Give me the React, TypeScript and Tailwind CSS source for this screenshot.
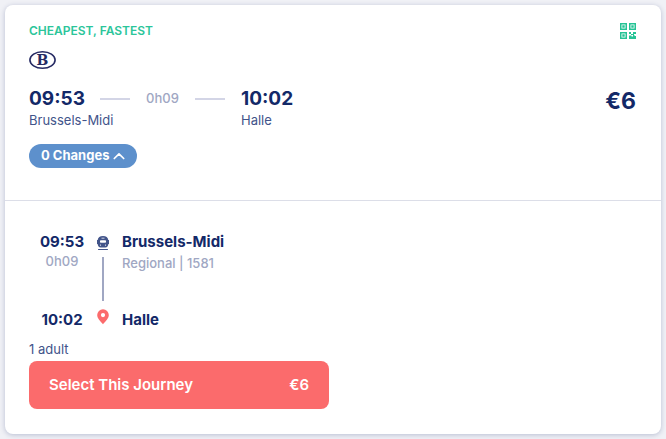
const OperatorLogo = () => (
    <svg width="27" height="18" viewBox="0 0 27 18" role="img" aria-label="SNCB" className="block">
        <ellipse cx="13.5" cy="9" rx="12.6" ry="8.2" fill="#fff" stroke="#252a63" strokeWidth="1.6" />
        <text
            x="13.5"
            y="14"
            textAnchor="middle"
            fontSize="14"
            fontWeight="700"
            fill="#252a63"
            className="font-['DejaVu_Serif',serif]"
        >
            B
        </text>
    </svg>
);

const QrIcon = () => (
    <svg width="16" height="16" viewBox="0 0 16 16" fill="#26c395" aria-hidden="true" className="block">
        <path fillRule="evenodd" d="M0 0h7v7H0zM1.500 1.500v4h4v-4zM2.300 2.300h2.400v2.400H2.300z" />
        <path fillRule="evenodd" d="M9 0h7v7H9zM10.500 1.500v4h4v-4zM11.300 2.300h2.400v2.400h-2.400z" />
        <path fillRule="evenodd" d="M0 9h7v7H0zM1.500 10.500v4h4v-4zM2.300 11.300h2.400v2.400H2.300z" />
        <path d="M9 9h2v2H9zM13 9h3v2h-2v1h-3v-1h2zM9 12.5h2.500v1H13V12h1.500v1H16v3H9z" />
    </svg>
);

const TrainIcon = () => (
    <svg width="14" height="16" viewBox="0 0 14 16" aria-hidden="true" className="block">
        <path
            fill="#42548a"
            fillRule="evenodd"
            d="M7 1c3.200 0 4.900 1.600 5.300 4h.7v4h-.6c-.2 1.900-1.300 3.500-3 3.500H4.600c-1.700 0-2.800-1.600-3-3.500H1V5h.7C2.100 2.600 3.800 1 7 1zM4 5.500v2c2 .4 4 .4 6 0v-2c-2-.3-4-.3-6 0zM5.500 2.800v.7h3v-.7zM4.500 9.500a.6.6 0 1 0 0 1.200.6.6 0 0 0 0-1.200zm5 0a.6.6 0 1 0 0 1.200.6.6 0 0 0 0-1.200z"
        />
        <path stroke="#42548a" strokeWidth="1" strokeLinecap="round" d="M2.500 14.500h9" />
    </svg>
);

const PinIcon = () => (
    <svg width="12" height="16" viewBox="0 0 12 16" aria-hidden="true" className="block">
        <path
            fill="#fb6b6c"
            fillRule="evenodd"
            d="M6 .3a5.800 5.800 0 0 1 5.800 5.800C11.800 9.500 8.700 12.300 6 15.300 3.300 12.300.2 9.500.2 6.100A5.800 5.800 0 0 1 6 .3zm0 3.700a2.100 2.100 0 1 0 0 4.200A2.100 2.100 0 0 0 6 4z"
        />
    </svg>
);

const CaretUp = () => (
    <svg width="12" height="8" viewBox="0 0 12 8" fill="none" aria-hidden="true" className="block">
        <path d="M1.300 6.500 6 1.800l4.700 4.700" stroke="#fff" strokeWidth="1.700" strokeLinecap="round" strokeLinejoin="round" />
    </svg>
);

const Summary = () => {
    return (
        <section className="border-b border-[#dcdee8] pt-4 pr-[25px] pb-8 pl-6">
            <div className="flex items-center justify-between">
                <p className="text-xs leading-5 font-semibold text-[#2bc59a]">CHEAPEST, FASTEST</p>
                <QrIcon />
            </div>
            <div className="mt-2.5">
                <OperatorLogo />
            </div>
            <div className="mt-[17px] flex items-start justify-between">
                <div className="flex">
                    <div className="w-[71px]">
                        <p className="text-[19px] leading-[26px] font-bold">09:53</p>
                        <p className="text-[13px] leading-4 whitespace-nowrap text-[#42548a]">Brussels-Midi</p>
                    </div>
                    <div className="flex h-[26px] w-[125px] items-center justify-between">
                        <span className="h-0.5 w-[30px] bg-[#d3d5e6]"></span>
                        <span className="text-[13px] font-medium text-[#a0a7c3]">0h09</span>
                        <span className="h-0.5 w-[30px] bg-[#d3d5e6]"></span>
                    </div>
                    <div className="ml-4">
                        <p className="text-[19px] leading-[26px] font-bold">10:02</p>
                        <p className="text-[13px] leading-4 text-[#42548a]">Halle</p>
                    </div>
                </div>
                <p className="text-[23px] leading-[30px] font-bold">€6</p>
            </div>
            <button
                type="button"
                aria-expanded="true"
                className="mt-4 flex h-6 cursor-pointer items-center gap-1 rounded-full bg-[#5d90cc] px-3 text-[13px] font-bold text-white"
            >
                0 Changes
                <CaretUp />
            </button>
        </section>
    );
};

const Details = () => {
    return (
        <section className="px-6 pt-[29px] pb-[25px]">
            <div className="flex">
                <div className="flex w-[66px] flex-col justify-between text-center">
                    <div>
                        <p className="text-[15px] leading-6 font-bold">09:53</p>
                        <p className="text-[13px] leading-[14px] font-medium text-[#a0a7c3]">0h09</p>
                    </div>
                    <p className="text-[15px] leading-6 font-bold">10:02</p>
                </div>
                <div className="flex w-4 flex-col items-center pt-[5px] pb-[7px]">
                    <TrainIcon />
                    <span className="mt-1.5 mb-2 h-11 w-0.5 bg-[#a0a7c3]"></span>
                    <PinIcon />
                </div>
                <div className="ml-[11px] flex flex-col justify-between">
                    <div>
                        <p className="text-[15px] leading-6 font-bold">Brussels-Midi</p>
                        <p className="text-[13px] leading-[18px] font-medium text-[#a0a7c3]">Regional | 1581</p>
                    </div>
                    <p className="text-[15px] leading-6 font-bold">Halle</p>
                </div>
            </div>
            <p className="mt-[7px] text-[13px] leading-5 text-[#42548a]">1 adult</p>
            <button
                type="button"
                className="mt-0.5 flex h-12 w-full max-w-[300px] cursor-pointer items-center justify-between rounded-lg bg-[#fb6b6c] px-5 text-[15px] font-semibold text-white"
            >
                <span>Select This Journey</span>
                <span>€6</span>
            </button>
        </section>
    );
};

const App = () => {
    return (
        <main className="min-h-screen bg-[#f0f1f6] p-[5px] font-['Inter',sans-serif] text-[#132968]">
            <article className="rounded-lg bg-white shadow-[0_1px_5px_rgba(19,41,104,0.25)]">
                <Summary />
                <Details />
            </article>
        </main>
    );
};

export default App;
